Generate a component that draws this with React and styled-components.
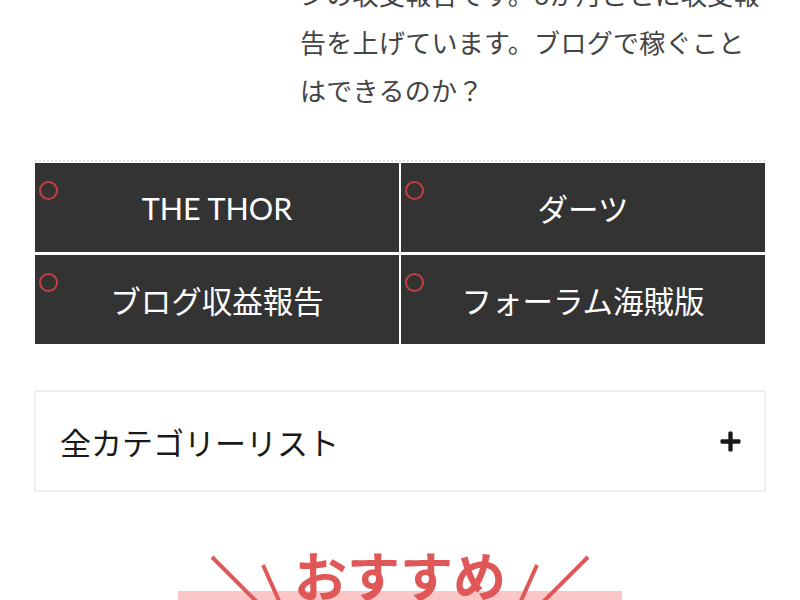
import React from 'react';
import styled, { createGlobalStyle } from 'styled-components';
import { FaPlus } from 'react-icons/fa';

const GlobalStyle = createGlobalStyle`
  html, body {
    margin: 0;
    padding: 0;
    background: #fff;
    overflow: hidden;
  }
  body {
    font-family: Lato, 'Noto Sans CJK JP', sans-serif;
  }
`;

const categories = ['THE THOR', 'ダーツ', 'ブログ収益報告', 'フォーラム海賊版'];

const App = () => {
  return (
    <Page>
      <GlobalStyle />
      <Excerpt>
        ンの収支報告です。6か月ごとに収支報告を上げています。ブログで稼ぐことはできるのか？
      </Excerpt>

      <CategoryGrid>
        {categories.map((c) => (
          <CategoryCell key={c}>
            <Ring />
            {c}
          </CategoryCell>
        ))}
      </CategoryGrid>

      <Accordion>
        <span>全カテゴリーリスト</span>
        <FaPlus className='acc-icon' />
      </Accordion>

      <Recommend>
        <Rays viewBox='0 0 444 50' preserveAspectRatio='none'>
          <line x1='34' y1='6' x2='80' y2='52' />
          <line x1='85' y1='14' x2='102' y2='52' />
          <line x1='359' y1='14' x2='342' y2='52' />
          <line x1='410' y1='6' x2='364' y2='52' />
        </Rays>
        <RecTitle>おすすめ</RecTitle>
      </Recommend>
    </Page>
  );
};

const Page = styled.div`
  width: 800px;
  height: 600px;
  padding: 0 34px;
  box-sizing: border-box;
  overflow: hidden;
`;

const Excerpt = styled.p`
  margin: -29px 0 0 266px;
  width: 470px;
  font-size: 26px;
  line-height: 48px;
  color: #444;
  letter-spacing: 0.3px;
`;

const CategoryGrid = styled.div`
  margin: 45px 1px 0;
  border-top: 2px dotted #ddd;
  padding-top: 1px;
  display: grid;
  grid-template-columns: 1fr 1fr;
  gap: 3px 2px;
`;

const CategoryCell = styled.div`
  position: relative;
  height: 89px;
  background: #333;
  color: #fff;
  font-size: 30.5px;
  display: flex;
  align-items: center;
  justify-content: center;
`;

const Ring = styled.span`
  position: absolute;
  left: 4px;
  top: 18px;
  width: 19px;
  height: 19px;
  border: 2.5px solid #c0413e;
  border-radius: 50%;
  box-sizing: border-box;
`;

const Accordion = styled.div`
  margin-top: 46px;
  height: 102px;
  box-sizing: border-box;
  border: 2px solid #eee;
  display: flex;
  align-items: center;
  justify-content: space-between;
  padding: 0 22px 0 24px;
  font-size: 31px;
  color: #191919;

  .acc-icon {
    font-size: 23px;
    color: #191919;
  }
`;

const Recommend = styled.div`
  position: relative;
  margin: 59px auto 0;
  width: 444px;
  height: 60px;
  background: linear-gradient(to bottom, transparent 40px, #fdc6c6 40px);
  display: flex;
  justify-content: center;
`;

const Rays = styled.svg`
  position: absolute;
  left: 0;
  top: 0;
  width: 444px;
  height: 50px;
  stroke: #e05757;
  stroke-width: 4;
`;

const RecTitle = styled.div`
  position: relative;
  font-size: 53px;
  font-weight: 700;
  color: #e05757;
  line-height: 60px;
  margin-top: -4px;
`;

export default App;
